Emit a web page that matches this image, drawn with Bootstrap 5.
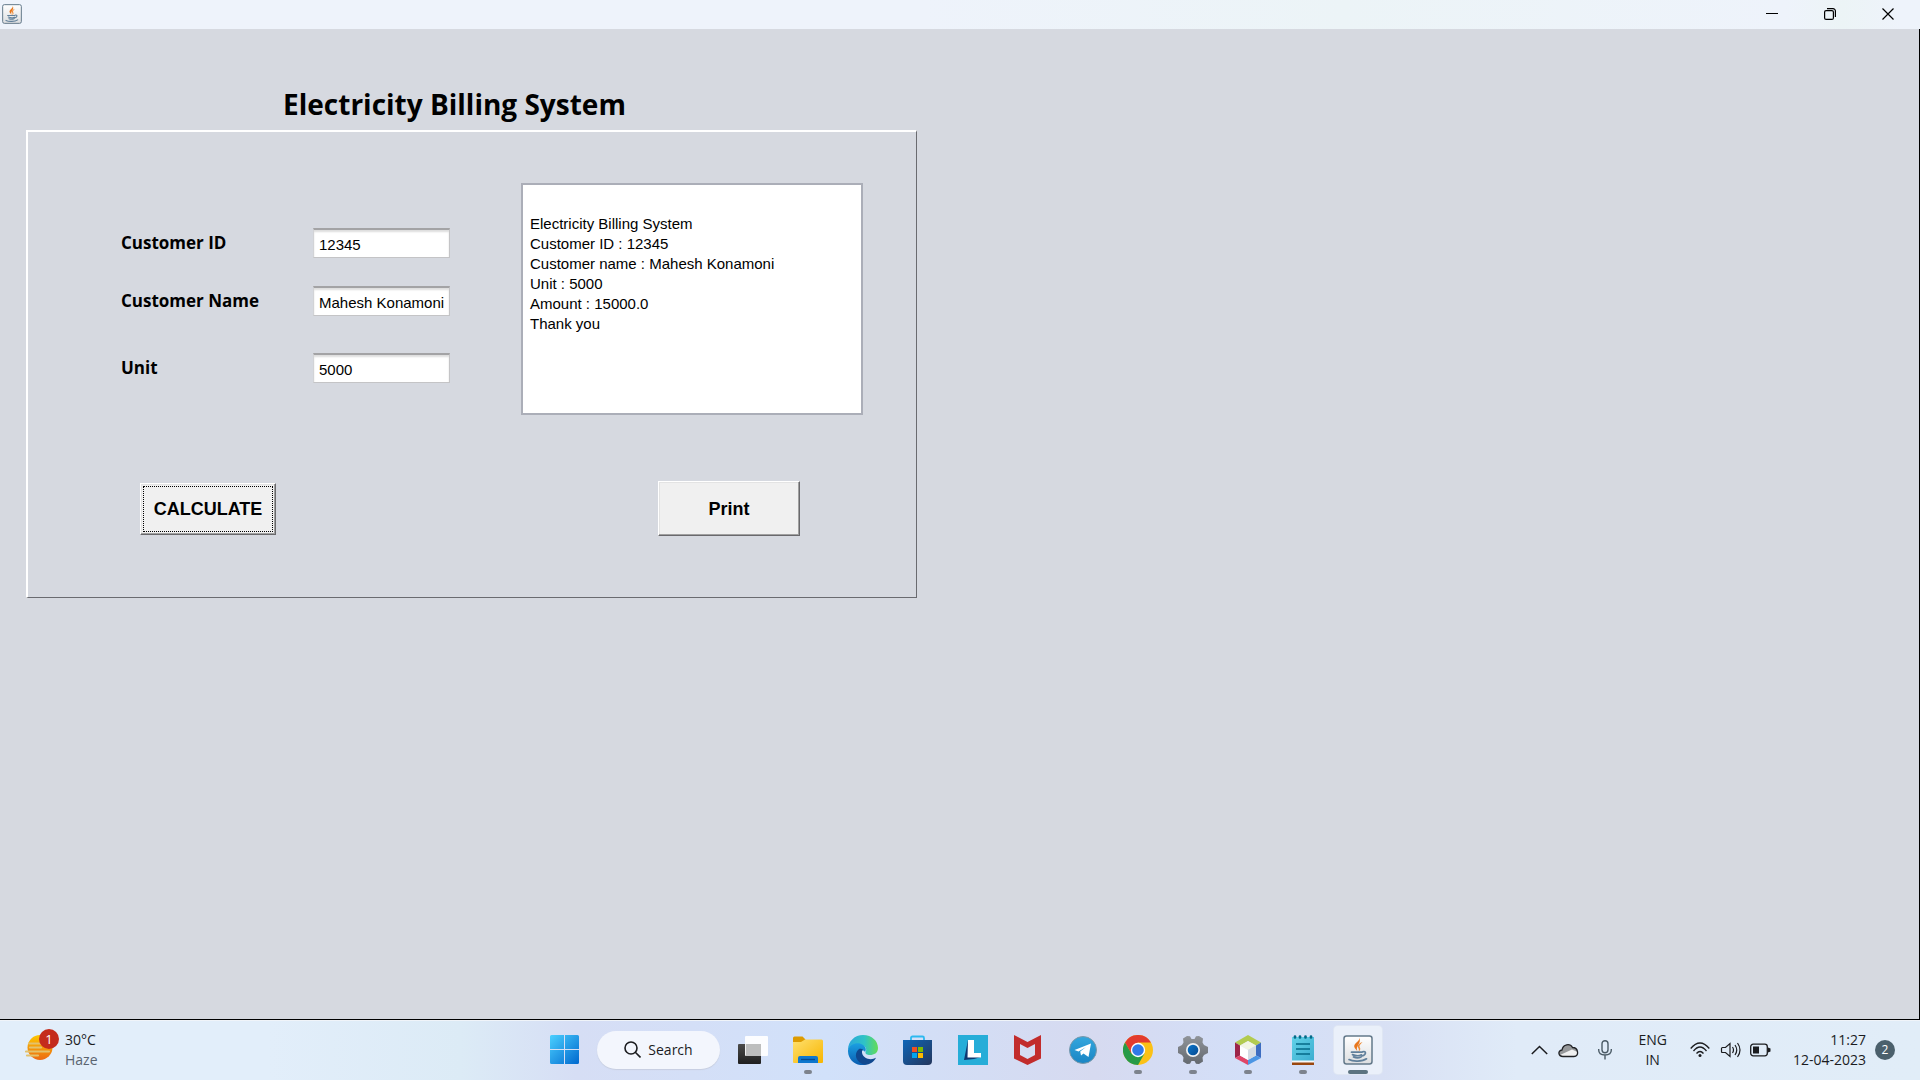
<!DOCTYPE html>
<html lang="en">
<head>
<meta charset="utf-8">
<meta name="viewport" content="width=device-width, initial-scale=1">
<title>Electricity Billing System</title>
<link href="https://cdn.jsdelivr.net/npm/bootstrap@5.3.0/dist/css/bootstrap.min.css" rel="stylesheet">
<style>
body{font-family:"Open Sans","Noto Sans",sans-serif;background:#d6d9e0;color:#000}
svg{display:block;flex:none}
.titlebar{height:29px;background:linear-gradient(90deg,#eef3fb 0,#eef3fb 48%,#ecf4f7 70%,#eef3fb 93%,#ecf4f6 96%,#eef3fb 99%);padding:0 3px 1px 2px}
.winbtn{width:58px;height:28px;border:0;border-radius:0;padding:0;background:transparent;color:#000;display:flex;align-items:center;justify-content:center}
.client{border-right:1px solid #000;border-bottom:1px solid #000;padding:54px 0 0 26px}
.frame-wrap{max-width:891px}
.app-title{font-size:28px;line-height:42px;font-weight:700;margin:0 0 5px;padding-right:34px}
.frame{border:1px solid #6a6b70;border-top:2px solid #fff;border-left:2px solid #fff;padding:51px 53px 61px 93px}
.fields{padding-top:45px;gap:28px}
.field-label{width:192px;font-size:17px;line-height:24px;font-weight:700}
.field-box{width:137px;height:30px;border-radius:0;border:1px solid #c4c4c6;border-top:2px solid #a3a3a5;border-left-color:#d2d3d6;padding:1px 4px 0 5px;font:15px/20px "Liberation Sans",Arial,sans-serif;color:#000;box-shadow:inset 0 2px 2px #dedede}
.last-field{margin-top:9px}
.receipt{width:342px;height:232px;border:2px solid #abaeb8;border-radius:0;padding:9px 7px;font:15px/20px "Liberation Sans",Arial,sans-serif;color:#000;resize:none;background:#fff}
.actions{margin-top:66px;padding:0 63px 0 19px}
.push{height:55px;width:142px;border-radius:0;border:1px solid;border-color:#fff #69696c #69696c #fff;background:#f0f0f0;color:#000;font:700 18px/20px "Liberation Sans",Arial,sans-serif;padding:0;box-shadow:inset -1px -1px #a0a0a0,inset 1px 1px #e3e3e3}
.push-calc{width:136px;height:52px;outline:1px dotted #000;outline-offset:-4px}
.taskbar{height:60px;display:grid;grid-template-columns:1fr auto 1fr;align-items:center;background:linear-gradient(90deg,#e2eefa 0,#e2eefa 14%,#dcebf6 24%,#d6def5 30%,#d4dff7 36%,#d1e1fa 43%,#d6daf0 57%,#d3dff8 65%,#d8e0f4 72%,#e0ebf8 79%,#e1edf8 100%);border-top:1px solid #f0f4f9;color:#1b1c1f;font-size:14px;line-height:20px;padding:0 0 2px 3px}
.task{width:55px;height:48px;padding:0;border:0;border-radius:4px;display:flex;align-items:center;justify-content:center;position:relative}
.running::after{content:"";position:absolute;bottom:0;left:50%;margin-left:-4px;width:8px;height:4px;border-radius:2px;background:#7d838d}
.task-on{width:48px;background:#eaf0fa;box-shadow:0 0 0 1px #dfe6f3;margin:0 4px}
.task-on::after{width:20px;margin-left:-10px;background:#5b7380}
.searchpill{width:123px;height:38px;border:0;border-radius:19px;background:#f3f6fd;box-shadow:0 1px 1px #c7cee0;margin:0 5px;padding:0;color:#1b1c1f;font-size:14px;display:flex;align-items:center;justify-content:center;gap:7px}
.weather{padding-left:22px;gap:6px}
.haze{color:#5a6470}
.tray{padding-right:25px}
.tray-cloud{margin-left:6px}
.tray-lang{margin:0 23px 0 26px}
.tray-sound{margin-left:10px}
.tray-clock{margin-left:22px}
.notify{width:20px;height:20px;border-radius:10px;background:#4b606c;color:#fff;font-size:12px;margin-left:9px}
</style>
<script src="https://cdn.jsdelivr.net/npm/bootstrap@5.3.0/dist/js/bootstrap.bundle.min.js"></script>
</head>
<body class="vh-100 d-flex flex-column overflow-hidden">
<svg width="0" height="0" class="position-absolute" aria-hidden="true">
<defs>
<linearGradient id="gWin" gradientUnits="userSpaceOnUse" x1="0" y1="0" x2="29" y2="29"><stop stop-color="#4bd0ff"/><stop offset="1" stop-color="#0068ce"/></linearGradient>
<linearGradient id="gFold" x1="0" y1="0" x2="1" y2="1"><stop stop-color="#ffe06e"/><stop offset="1" stop-color="#f7b500"/></linearGradient>
<linearGradient id="gDark" x1="0" y1="0" x2="0" y2="1"><stop stop-color="#4b4b4a"/><stop offset="1" stop-color="#1f1f1f"/></linearGradient>
<linearGradient id="gEdge" x1="0" y1="0" x2="1" y2="0"><stop stop-color="#2aa6dc"/><stop offset=".55" stop-color="#2fc3c6"/><stop offset="1" stop-color="#64dc55"/></linearGradient>
<linearGradient id="gEdgeB" x1="0" y1="0" x2="0" y2="1"><stop stop-color="#1ba0e2"/><stop offset="1" stop-color="#0a5cb0"/></linearGradient>
<linearGradient id="gStore" x1="0" y1="0" x2="1" y2="1"><stop stop-color="#0f66b8"/><stop offset="1" stop-color="#24365c"/></linearGradient>
<linearGradient id="gSun" x1="0" y1="0" x2="0" y2="1"><stop stop-color="#fdc800"/><stop offset="1" stop-color="#ec6a13"/></linearGradient>
<linearGradient id="gTel" x1="0" y1="0" x2="0" y2="1"><stop stop-color="#34a7de"/><stop offset="1" stop-color="#1a85c4"/></linearGradient>
<linearGradient id="gGear" x1="0" y1="0" x2="0" y2="1"><stop stop-color="#909499"/><stop offset="1" stop-color="#64696f"/></linearGradient>
<linearGradient id="gBlue" x1="0" y1="0" x2="1" y2="1"><stop stop-color="#0b76cc"/><stop offset="1" stop-color="#064a90"/></linearGradient>
<linearGradient id="gNote" x1="0" y1="0" x2="1" y2="1"><stop stop-color="#62d2e8"/><stop offset="1" stop-color="#3cadd0"/></linearGradient>
<linearGradient id="gJava" x1="0" y1="0" x2="0" y2="1"><stop stop-color="#fff"/><stop offset="1" stop-color="#dcdee0"/></linearGradient>
<symbol id="java" viewBox="0 0 30 30">
<rect x="1" y="1" width="28" height="28" rx="2.500" fill="url(#gJava)" stroke="#63798a" stroke-width="1.500"/>
<path d="M16 2.500c1.500 3.500-5 5.500-4.800 9 .3 2 2.800 3.200 3.300 5.500-.6-2.500-1.200-3.500 0-5.500 1-2.500 3.700-5 1.500-9z" fill="#e8761c"/>
<path d="M19.500 7c-3.500 1-5.500 3.500-4.500 5.500.8 1.300 1.500 2.300.3 4.500 3.200-2.500 1.700-4 1.200-5.500 0-1.500 1.500-3 3-4.500z" fill="#ec8a36"/>
<path d="M8.500 17.200h10.500M9.500 19.600c3 1.300 7 1.200 9 .2M10.500 22c2.500 1 5.500.9 7.500 0M19.500 16.800c4-1.200 4 3-.5 4.200M6 24.600c4 2.200 13.500 2 17.500-.8" fill="none" stroke="#61809b" stroke-width="1.700" stroke-linecap="round"/>
</symbol>
</defs>
</svg>

<header class="titlebar d-flex align-items-center justify-content-between">
<svg width="20" height="20" aria-hidden="true"><use href="#java"/></svg>
<div class="d-flex">
<button type="button" class="winbtn" aria-label="Minimize"><svg width="12" height="12"><path d="M0 5.500h12" stroke="#000"/></svg></button>
<button type="button" class="winbtn" aria-label="Restore"><svg width="12" height="12" fill="none" stroke="#000" stroke-width="1.200"><rect x=".6" y="2.600" width="8.800" height="8.800" rx="1.500"/><path d="M3 .6h6a2.400 2.400 0 0 1 2.400 2.400v6"/></svg></button>
<button type="button" class="winbtn" aria-label="Close"><svg width="12" height="12"><path d="M.5.5l11 11M11.500.5l-11 11" stroke="#000" stroke-width="1.200"/></svg></button>
</div>
</header>

<main class="client flex-grow-1">
<div class="frame-wrap">
<h1 class="app-title text-center">Electricity Billing System</h1>
<form class="frame">
<div class="d-flex justify-content-between align-items-start">
<div class="fields d-flex flex-column">
<div class="d-flex align-items-center"><label class="field-label" for="cid">Customer ID</label><input class="field-box" id="cid" type="text" value="12345"></div>
<div class="d-flex align-items-center"><label class="field-label" for="cname">Customer Name</label><input class="field-box" id="cname" type="text" value="Mahesh Konamoni"></div>
<div class="d-flex align-items-center last-field"><label class="field-label" for="unit">Unit</label><input class="field-box" id="unit" type="text" value="5000"></div>
</div>
<textarea class="receipt" aria-label="Bill">

Electricity Billing System
Customer ID : 12345
Customer name : Mahesh Konamoni
Unit : 5000
Amount : 15000.0
Thank you</textarea>
</div>
<div class="actions d-flex justify-content-between align-items-center">
<button type="button" class="push push-calc">CALCULATE</button>
<button type="button" class="push">Print</button>
</div>
</form>
</div>
</main>

<footer class="taskbar">
<div class="weather d-flex align-items-center">
<svg width="34" height="42" viewBox="0 0 34 42"><circle cx="15" cy="18.500" r="12.500" fill="url(#gSun)"/><path d="M4 14.500h13M5 18.500h11M1 22.500h23M2 26.500h11" stroke="#e3c26c" stroke-width="2.200" stroke-linecap="round"/><circle cx="24" cy="10" r="10" fill="#c42b1c"/><text x="24" y="15" fill="#fff" font-size="13" text-anchor="middle">1</text></svg>
<div><div>30°C</div><div class="haze">Haze</div></div>
</div>

<nav class="d-flex align-items-center" aria-label="Taskbar">
<button class="task btn" aria-label="Start"><svg width="29" height="29"><path d="M0 1.500Q0 0 1.500 0H14v14H0zM15 0h12.500Q29 0 29 1.500V14H15zM0 15h14v14H1.500Q0 29 0 27.500zM15 15h14v12.500q0 1.500-1.500 1.500H15z" fill="url(#gWin)"/></svg></button>
<button class="searchpill" type="button"><svg width="17" height="17" fill="none" stroke="#1b1c1f" stroke-width="1.600"><circle cx="7" cy="7" r="6"/><path d="M11.300 11.300l5.200 5.200"/></svg>Search</button>
<button class="task btn" aria-label="Task view"><svg width="30" height="28"><rect y="8" width="23" height="20" rx="1" fill="url(#gDark)"/><rect x="7" width="23" height="20" rx="1" fill="#fff" opacity=".92"/><path d="M8 8h15v12H8z" fill="#bdbebe"/></svg></button>
<button class="task btn running" aria-label="File Explorer"><svg width="30" height="28"><path d="M0 2Q0 .5 1.500.5h8l3 3-2 4H0z" fill="#dd9b00"/><path d="M0 6h8l4-2.500h16.500Q30 3.500 30 5v21q0 1-1 1H1q-1 0-1-1z" fill="url(#gFold)"/><path d="M5 27v-5q0-2 2-2h16q2 0 2 2v5z" fill="#0f78ce"/><path d="M8 23.500h14" stroke="#064a90" stroke-width="1.300"/></svg></button>
<button class="task btn" aria-label="Edge"><svg width="30" height="30"><path d="M0 15C0 6 7 0 15 0c9 0 15 6 15 13 0 5-4 7-8 7-3 0-5-1-4.500-3 1.500-2 .5-5-2-6C10 8 3 10 0 15z" fill="url(#gEdge)"/><path d="M0 15c2-6 10-9 15-5 3 2 3.500 5 2 7-2-3-6-1-6 3 0 6 6 8 9 9C10 33-.5 26 0 15z" fill="url(#gEdgeB)"/><path d="M11 14c-6 5-3 14 6 15.800 5 0 9-3 11-7-5 3-13 1-14-5-.2-2 .5-3 1-3.500-1.500-.8-3-.8-4-.3z" fill="#10488f"/></svg></button>
<button class="task btn" aria-label="Microsoft Store"><svg width="29" height="30"><path d="M8 6V3q0-1.500 1.500-1.500h10Q21 1.500 21 3v3" fill="none" stroke="#2cb9f0" stroke-width="1.800"/><path d="M0 5h29v21q0 4-4 4H4q-4 0-4-4z" fill="url(#gStore)"/><path d="M9 12h5v5H9z" fill="#f25022"/><path d="M15 12h5v5h-5z" fill="#7fba00"/><path d="M9 18h5v5H9z" fill="#00a4ef"/><path d="M15 18h5v5h-5z" fill="#ffb900"/></svg></button>
<button class="task btn" aria-label="L"><svg width="30" height="30"><path d="M0 0h30v30H0z" fill="#26add8"/><path d="M10 5L6 25l10-1 7-2-9-3z" fill="#0c3770"/><path d="M10 5h6v13h7v4.500H9.500z" fill="#fff"/></svg></button>
<button class="task btn" aria-label="McAfee"><svg width="27" height="30"><path d="M0 0l13.500 7L27 0v23.500L13.500 30 0 23.500zM6 9v11l7.500 4 7.500-4V9l-7.500 4z" fill="#c22c2c" fill-rule="evenodd"/></svg></button>
<button class="task btn" aria-label="Telegram"><svg width="28" height="28"><circle cx="14" cy="14" r="13.500" fill="url(#gTel)" stroke="#7a98aa"/><path d="M5.500 14L22 7.500 19.500 21l-5-3.500-2.500 2-.8-4L17 11l-7.500 4.500z" fill="#fff"/></svg></button>
<button class="task btn running" aria-label="Chrome"><svg width="30" height="30"><circle cx="15" cy="15" r="15" fill="#fbc116"/><path d="M2 7.500A15 15 0 0 1 28 7.500H15L8.500 19z" fill="#e33b2e"/><path d="M2 7.500A15 15 0 0 0 15 30l6.500-11.500L15 15l-6.500 3.700z" fill="#269a48"/><circle cx="15" cy="15" r="7.200" fill="#fff"/><circle cx="15" cy="15" r="5.800" fill="#3079e8"/></svg></button>
<button class="task btn running" aria-label="Settings"><svg width="30" height="30"><path d="M9 1l3 .3 1.500 2.700h3L18 1.300 21 1l4 2.500-.5 4 1.500 2.500 4 2v6l-4 2-1.500 2.500.5 4L21 29l-3-.3-1.500-2.700h-3L12 28.700 9 29l-4-2.500.5-4L4 20l-4-2v-6l4-2 1.500-2.500-.5-4z" fill="url(#gGear)"/><circle cx="15" cy="15" r="7" fill="#f0f2f4"/><circle cx="15" cy="15" r="5.300" fill="url(#gBlue)"/></svg></button>
<button class="task btn running" aria-label="NetBeans"><svg width="26" height="30"><path d="M0 7.500L13 0l13 7.500-5 3L13 6l-8 4.500z" fill="#b2cb50"/><path d="M0 7.500l5 3v10L0 23z" fill="#9c2549"/><path d="M0 23l5-2.500 8 4.500v5z" fill="#e04668"/><path d="M26 7.500l-5 3v10l5 2.500z" fill="#3d6dc0"/><path d="M26 23l-5-2.500-8 4.500v5z" fill="#4c96e4"/><path d="M5 10.500L13 6l8 4.500-8 4.500z" fill="#f2f5e3"/><path d="M5 10.500l8 4.500v10l-8-4.500z" fill="#fff"/><path d="M21 10.500L13 15v10l8-4.500z" fill="#d5dce3"/></svg></button>
<button class="task btn running" aria-label="Notepad"><svg width="22" height="30"><path d="M0 25h22v5H0z" fill="#99470f"/><path d="M0 25h22v2.500H0z" fill="#f7f7f7"/><path d="M0 2h22v23.500H0z" fill="url(#gNote)"/><path d="M4 9h14M4 14h14M4 19h14" stroke="#056a88" stroke-width="1.700"/><path d="M3 1.500v1M8 1.500v1M13.500 1.500v1M19 1.500v1" stroke="#056a88" stroke-width="2.700" stroke-linecap="round"/></svg></button>
<button class="task btn running task-on" aria-label="Java"><svg width="30" height="30"><use href="#java"/></svg></button>
</nav>

<div class="tray d-flex align-items-center justify-content-end">
<svg width="17" height="10" fill="none" stroke="#1b1c1f" stroke-width="1.500"><path d="M.8 9l7.700-7.500L16.200 9"/></svg>
<svg class="tray-cloud" width="28" height="20"><path d="M9 16.500c-5 0-5.500-6-1-6.500 1-6 8-7 10.500-2.500 6 0 7 9 1.500 9z" fill="#96989a"/><path d="M6 15c2 1.500 4 1.500 6 1.500h8c3 0 4-2 3.500-4.500l-5.500-2.500z" fill="#f0f0f0"/><path d="M9 16.500c-5 0-5.500-6-1-6.500 1-6 8-7 10.500-2.500 6 0 7 9 1.500 9z" fill="none" stroke="#202124" stroke-width="1.300"/></svg>
<svg class="ms-3" width="14" height="20" fill="none" stroke="#4b5b66" stroke-width="1.400"><rect x="4" y=".7" width="6" height="12" rx="3"/><path d="M.7 9v1q0 5 6.300 5t6.300-5V9M7 15v4.500"/></svg>
<div class="tray-lang text-center">ENG<br>IN</div>
<svg width="20" height="16" fill="none" stroke="#1b1c1f" stroke-width="1.300"><path d="M.7 6.500q9.300-11 18.600 0M3.500 9q6.500-8 13 0M6.500 11.500q3.500-4 7 0"/><circle cx="10" cy="13.500" r="1.500" fill="#1b1c1f" stroke="none"/></svg>
<svg class="tray-sound" width="22" height="16" fill="none" stroke="#1b1c1f" stroke-width="1.200"><path d="M2.500 5.500h3L10 1.500v13l-4.500-4h-3Q1.500 10.500 1.500 9.500v-3q0-1 1-1zM12.500 5q2 3 0 6M15 3q3.500 5 0 10M17.500 1q5 7 0 14"/></svg>
<svg class="ms-2" width="21" height="14"><rect x=".7" y="1.200" width="16.600" height="11.600" rx="2.500" fill="none" stroke="#1b1c1f" stroke-width="1.300"/><path d="M3 3.500h6v7H3zM18 4.500l2.500 1v3l-2.500 1z" fill="#1b1c1f"/></svg>
<div class="tray-clock text-end">11:27<br>12-04-2023</div>
<div class="notify d-flex align-items-center justify-content-center">2</div>
</div>
</footer>
</body>
</html>
